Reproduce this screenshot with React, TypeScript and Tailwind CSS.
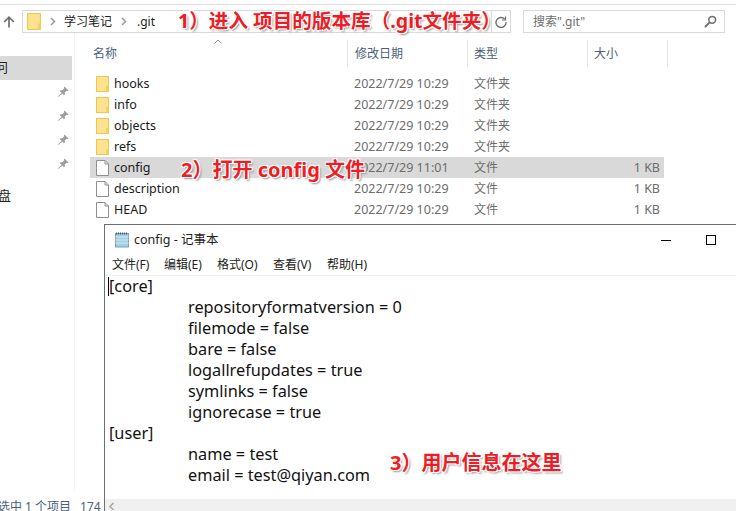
const folders = ["hooks", "info", "objects", "refs"];
const files = ["config", "description", "HEAD"];
const configLines = [
  { text: "[core]", indent: false },
  { text: "repositoryformatversion = 0", indent: true },
  { text: "filemode = false", indent: true },
  { text: "bare = false", indent: true },
  { text: "logallrefupdates = true", indent: true },
  { text: "symlinks = false", indent: true },
  { text: "ignorecase = true", indent: true },
  { text: "[user]", indent: false },
  { text: "name = test", indent: true },
  { text: "email = test@qiyan.com", indent: true },
];
const menus = [
  { label: "文件(F)", width: "w-[52px]" },
  { label: "编辑(E)", width: "w-[53px]" },
  { label: "格式(O)", width: "w-[56px]" },
  { label: "查看(V)", width: "w-[54px]" },
  { label: "帮助(H)", width: "w-[50px]" },
];

function FolderIcon({ small }: { small?: boolean }) {
  return (
    <svg width={small ? 14 : 13} height={small ? 17 : 16} viewBox="0 0 13 16" className="shrink-0">
      <rect x="0.5" y="0.5" width="12" height="15" fill="#fde28f" stroke="#ecc64f" />
      <rect x="10" y="10" width="2.5" height="5.5" fill="#f3d062" />
    </svg>
  );
}

function FileIcon() {
  return (
    <svg width="13" height="16" viewBox="0 0 13 16" className="shrink-0">
      <path d="M0.5 0.5H9L12.5 4V15.5H0.5Z" fill="#fff" stroke="#8f8f8f" />
      <path d="M9 0.5V4H12.5" fill="none" stroke="#8f8f8f" />
    </svg>
  );
}

function PinIcon() {
  return (
    <svg width="11" height="11" viewBox="0 0 11 11">
      <path d="M6.5 0.5L10.5 4.5L9.5 5.2L8.7 4.8L6.8 6.6L6.8 8.6L6 9.2L1.8 5L2.4 4.2L4.4 4.2L6.2 2.3L5.8 1.5Z" fill="#9a9fa6" />
      <path d="M3.4 7.2L0.5 10.5L3.9 7.7Z" fill="#9a9fa6" stroke="#9a9fa6" strokeWidth="0.6" />
    </svg>
  );
}

function Chevron() {
  return (
    <svg width="6" height="9" viewBox="0 0 6 9" className="shrink-0">
      <path d="M1 1L4.5 4.5L1 8" fill="none" stroke="#9a9a9a" strokeWidth="1.5" />
    </svg>
  );
}

function Row({ name, selected, kind, date, type, size }: { name: string; selected?: boolean; kind: "folder" | "file"; date: string; type: string; size?: string }) {
  return (
    <div className={`flex h-[21px] w-[574px] items-center ${selected ? "bg-[#d9d9d9]" : ""}`}>
      <div className="flex w-[264px] items-center gap-[5px] pl-[6px]">
        {kind === "folder" ? <FolderIcon /> : <FileIcon />}
        <span className="pt-[2px] text-[12.5px] text-[#1a1a1a]">{name}</span>
      </div>
      <span className="w-[120px] pt-[2px] text-[12.5px] text-[#6d6d6d]">{date}</span>
      <span className="w-[120px] pt-[1px] text-[12px] text-[#6d6d6d]">{type}</span>
      <span className="w-[66px] pt-[2px] text-right text-[12.5px] text-[#6d6d6d]">{size}</span>
    </div>
  );
}

function Callout({ className, children }: { className: string; children: string }) {
  return (
    <div className={`absolute whitespace-pre leading-[26px] font-bold text-[#ee1c25] [text-shadow:1px_1px_0_#fff,-1px_-1px_0_#fff,1px_-1px_0_#fff,-1px_1px_0_#fff,2px_2px_2px_#999] ${className}`}>
      {children}
    </div>
  );
}

export default function App() {
  return (
    <div className="relative flex h-[511px] w-[736px] flex-col overflow-hidden bg-white [font-family:'Noto_Sans','Noto_Sans_CJK_SC',sans-serif]">
      {/* Toolbar */}
      <div className="mt-[4px] h-px bg-[#e2e2e2]" />
      <div className="mt-[5px] flex h-[23px] items-center">
        <svg width="12" height="12" viewBox="0 0 12 12" className="ml-[3px] mr-[7px]">
          <path d="M6 11.5V1.5M1.2 6L6 1.2L10.8 6" fill="none" stroke="#6e6e6e" strokeWidth="1.7" />
        </svg>
        <div className="flex h-[23px] w-[489px] items-center border border-[#d9d9d9]">
          <div className="ml-[4px]"><FolderIcon small /></div>
          <div className="ml-[9px]"><Chevron /></div>
          <span className="ml-[8px] text-[12px] text-[#222]">学习笔记</span>
          <div className="ml-[9px]"><Chevron /></div>
          <span className="ml-[10px] text-[12px] text-[#222]">.git</span>
          <div className="ml-auto flex h-full w-[19px] items-center justify-center border-l border-[#d9d9d9]">
            <svg width="12" height="12" viewBox="0 0 12 12">
              <path d="M9.6 3A5 5 0 1 0 11 6.2" fill="none" stroke="#6e6e6e" strokeWidth="1.4" />
              <path d="M10.5 0.5V4H7" fill="none" stroke="#6e6e6e" strokeWidth="1.2" />
            </svg>
          </div>
        </div>
        <div className="ml-[12px] flex h-[23px] w-[202px] items-center justify-between border border-[#d9d9d9] pl-[9px] pr-[7px]">
          <span className="text-[12px] text-[#6d6d6d]">搜索".git"</span>
          <svg width="13" height="13" viewBox="0 0 13 13">
            <circle cx="8.2" cy="4.8" r="3.4" fill="none" stroke="#6e6e6e" strokeWidth="1.5" />
            <path d="M5.6 7.4L1 12" stroke="#6e6e6e" strokeWidth="2" />
          </svg>
        </div>
      </div>

      {/* Body */}
      <div className="flex min-h-0 flex-1">
        <div className="flex h-[458px] w-[75px] shrink-0 flex-col border-r border-[#f2f2f2]">
          <div className="mt-[23px] flex h-[24px] w-[72px] items-center overflow-hidden bg-[#d9d9d9]">
            <span className="-ml-[5px] text-[13px] text-[#222]">问</span>
          </div>
          <div className="mt-[6px] flex flex-col items-end gap-[13px] pr-[5px]">
            <PinIcon />
            <PinIcon />
            <PinIcon />
            <PinIcon />
          </div>
          <span className="-ml-[2px] mt-[17px] text-[13px] leading-[18px] text-[#222]">盘</span>
        </div>
        <div className="flex flex-col">
          <div className="relative mt-[7px] flex h-[27px] items-start text-[12px] leading-[27px] text-[#4c607a]">
            <span className="ml-[18px] w-[254px]">名称</span>
            <span className="h-[27px] w-px bg-[#e5e5e5]" />
            <span className="w-[119px] pl-[7px]">修改日期</span>
            <span className="h-[27px] w-px bg-[#e5e5e5]" />
            <span className="w-[119px] pl-[6px]">类型</span>
            <span className="h-[27px] w-px bg-[#e5e5e5]" />
            <span className="w-[79px] pl-[6px]">大小</span>
            <span className="h-[27px] w-px bg-[#e5e5e5]" />
            <svg width="8" height="5" viewBox="0 0 8 5" className="absolute left-[139px] -top-[1px]">
              <path d="M0.5 4.5L4 1L7.5 4.5" fill="none" stroke="#8a8a8a" />
            </svg>
          </div>
          <div className="ml-[15px] mt-[6px]">
            {folders.map((f) => (
              <Row key={f} name={f} kind="folder" date="2022/7/29 10:29" type="文件夹" />
            ))}
            {files.map((f) => (
              <Row key={f} name={f} kind="file" selected={f === "config"} date={f === "config" ? "2022/7/29 11:01" : "2022/7/29 10:29"} type="文件" size="1 KB" />
            ))}
          </div>
        </div>
      </div>

      {/* Status bar */}
      <div className="absolute bottom-[-5px] left-[-2px] flex gap-[9px] text-[12px] leading-[18px] text-[#4c607a]">
        <span>选中 1 个项目</span>
        <span>174</span>
      </div>

      {/* Notepad window */}
      <div className="absolute left-[104px] top-[224px] flex h-[300px] w-[650px] flex-col border border-[#6f6f6f] bg-white">
        <div className="flex h-[29px] shrink-0 items-center pt-[1px]">
          <svg width="16" height="16" viewBox="0 0 16 16" className="ml-[9px]">
            <rect x="1.5" y="1.5" width="13" height="13.5" fill="#9fd0e6" stroke="#7f9fae" />
            <path d="M1.5 5H14.5M1.5 8H14.5M1.5 11H14.5" stroke="#d5e8f0" />
            <path d="M2 1.5H14" stroke="#555" strokeDasharray="1 1" strokeWidth="2" />
          </svg>
          <span className="ml-[4px] w-[442px] text-[12.5px] text-[#222]">config - 记事本</span>
          <span className="ml-[85px] h-px w-[10px] bg-black" />
          <span className="ml-[35px] h-[10px] w-[10px] border border-black" />
        </div>
        <div className="flex h-[21px] shrink-0 items-center pl-[7px] text-[12px] text-[#222]">
          {menus.map((m) => (
            <span key={m.label} className={m.width}>{m.label}</span>
          ))}
        </div>
        <div className="h-px shrink-0 bg-[#f0f0f0]" />
        <div className="relative pl-[4px] text-[16.3px] leading-[21px] text-[#111]">
          <span className="absolute left-[3px] top-[1px] h-[19px] w-px bg-black" />
          {configLines.map((l) => (
            <div key={l.text} className={`whitespace-pre ${l.indent ? "pl-[79px]" : ""}`}>{l.text}</div>
          ))}
        </div>
        <div className="absolute left-0 top-[274px] flex h-[14px] w-full items-center bg-[#f0f0f0] pl-[3px]">
          <svg width="7" height="9" viewBox="0 0 7 9">
            <path d="M5.5 1L2 4.5L5.5 8" fill="none" stroke="#a8a8a8" strokeWidth="1.6" />
          </svg>
        </div>
      </div>

      {/* Callouts */}
      <Callout className="left-[178px] top-[8px] text-[19.6px]">1）进入 项目的版本库（.git文件夹）</Callout>
      <Callout className="left-[181px] top-[157px] text-[20px]">2）打开 config 文件</Callout>
      <Callout className="left-[390px] top-[450px] text-[20px]">3）用户信息在这里</Callout>
    </div>
  );
}
